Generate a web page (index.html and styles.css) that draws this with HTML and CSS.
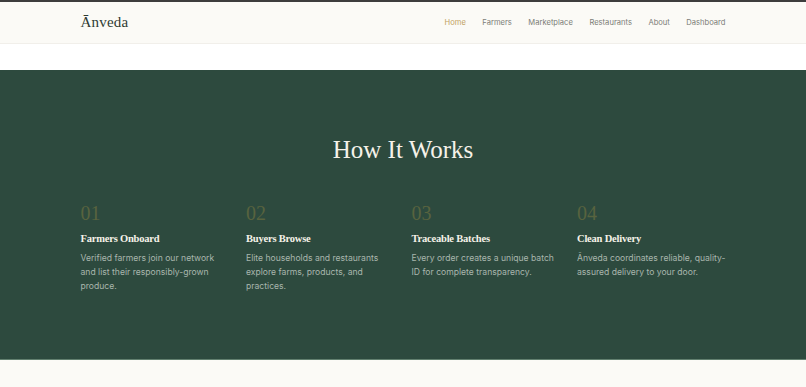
FILE: index.html
```html
<!DOCTYPE html>
<html lang="en">
<head>
    <meta charset="UTF-8">
    <meta name="viewport" content="width=device-width, initial-scale=1.0">
    <title>Ānveda</title>
    <link rel="stylesheet" href="styles.css">
</head>
<body>
    <header class="site-header">
        <div class="container nav-bar">
            <a class="logo" href="#">Ānveda</a>
            <nav class="nav-links">
                <a href="#" class="active">Home</a>
                <a href="#">Farmers</a>
                <a href="#">Marketplace</a>
                <a href="#">Restaurants</a>
                <a href="#">About</a>
                <a href="#">Dashboard</a>
            </nav>
        </div>
    </header>

    <div class="hero-gap"></div>

    <section class="how">
        <div class="container">
            <h2>How It Works</h2>
            <div class="steps">
                <div class="step">
                    <div class="step-num">01</div>
                    <h3>Farmers Onboard</h3>
                    <p>Verified farmers join our network and list their responsibly-grown produce.</p>
                </div>
                <div class="step">
                    <div class="step-num">02</div>
                    <h3>Buyers Browse</h3>
                    <p>Elite households and restaurants explore farms, products, and practices.</p>
                </div>
                <div class="step">
                    <div class="step-num">03</div>
                    <h3>Traceable Batches</h3>
                    <p>Every order creates a unique batch ID for complete transparency.</p>
                </div>
                <div class="step">
                    <div class="step-num">04</div>
                    <h3>Clean Delivery</h3>
                    <p>Ānveda coordinates reliable, quality-assured delivery to your door.</p>
                </div>
            </div>
        </div>
    </section>
</body>
</html>
```

FILE: styles.css
```css
body {
    margin: 0;
    padding: 0;
    background: #fbfaf6;
    font-family: Inter, "Liberation Sans", sans-serif;
    min-height: 100vh;
}
.container {
    max-width: 645px;
    margin: 0 auto;
}
.site-header {
    border-top: 2px solid #3d3d3d;
    background: #fbfaf6;
    border-bottom: 1px solid #f1efea;
}
.nav-bar {
    height: 41px;
    display: flex;
    align-items: center;
    justify-content: space-between;
}
.logo {
    font-family: "Liberation Serif", serif;
    font-size: 15px;
    color: #2f3a33;
    text-decoration: none;
    letter-spacing: 0.2px;
}
.nav-links {
    display: flex;
    gap: 16.5px;
}
.nav-links a {
    font-size: 7.6px;
    color: #7b7d76;
    text-decoration: none;
}
.nav-links a.active {
    color: #c2a15f;
}
.hero-gap {
    height: 26px;
    background: #ffffff;
}
.how {
    background: #2d4a3e;
    padding: 65px 0 66px;
    border-bottom: 1px solid #62806f;
}
.how h2 {
    margin: 0 0 35px;
    text-align: center;
    font-family: "Liberation Serif", serif;
    font-weight: normal;
    font-size: 25px;
    line-height: 30px;
    color: #f6f2e9;
}
.steps {
    display: grid;
    grid-template-columns: repeat(4, 1fr);
    gap: 17px;
}
.step-num {
    font-family: "Liberation Serif", serif;
    font-size: 20px;
    line-height: 26px;
    color: #58633f;
}
.step h3 {
    margin: 5px 0 4px;
    font-family: "Liberation Serif", serif;
    font-size: 10.5px;
    line-height: 16px;
    font-weight: bold;
    letter-spacing: -0.2px;
    color: #f6f2e9;
}
.step p {
    margin: 0;
    font-size: 8.6px;
    line-height: 14px;
    color: #a9b6ad;
}
```
